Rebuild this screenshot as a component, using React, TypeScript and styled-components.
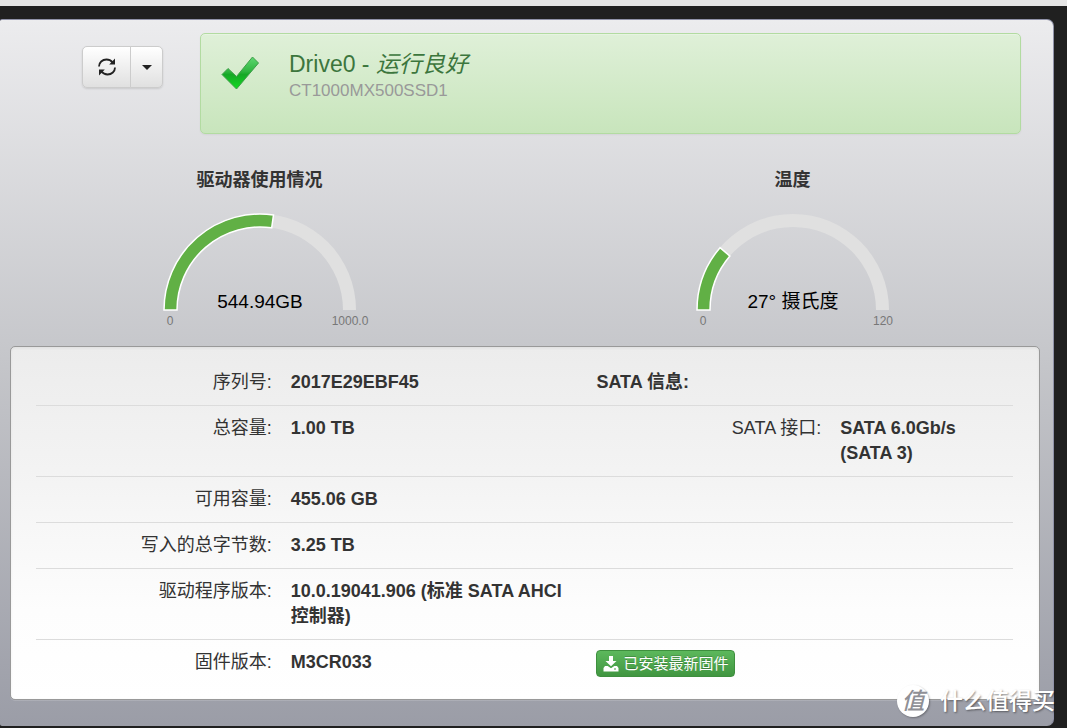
import React from "react";
import styled, { createGlobalStyle } from "styled-components";

const Global = createGlobalStyle`
  *, *::before, *::after { box-sizing: border-box; }
  body {
    margin: 0;
    background: #202020;
    color: #333;
    font: 18px/25px "Liberation Sans", "Noto Sans CJK SC", sans-serif;
  }
`;

const Page = styled.div`
  position: relative;
  display: flex;
  flex-direction: column;
  min-height: 100vh;
  padding-bottom: 2px;
  border-top: 6px solid #e5e5e5;
`;

const Panel = styled.main`
  flex: 1;
  margin: 13px 13px 0 0;
  padding: 13px 13px 24px 10px;
  border: 1px solid #9092a8;
  border-left: 0;
  border-bottom-color: #9b9da7;
  border-radius: 2px 7px 7px 2px;
  background: linear-gradient(#ececee, #c5c6ca 48%, #9b9da7);
`;

const Header = styled.header`
  display: flex;
  align-items: flex-start;
  gap: 37px;
  padding: 0 19px 0 72px;
`;

const ButtonGroup = styled.div`
  display: flex;
  margin-top: 13px;
  border-radius: 5px;
  box-shadow: 0 1px 2px rgba(0, 0, 0, 0.12);
`;

const ToolButton = styled.button<{ $side: "left" | "right" }>`
  display: flex;
  align-items: center;
  justify-content: center;
  width: ${(p) => (p.$side === "left" ? 49 : 33)}px;
  height: 42px;
  margin-left: ${(p) => (p.$side === "left" ? 0 : -1)}px;
  padding: 0;
  border: 1px solid #ccc;
  border-radius: ${(p) => (p.$side === "left" ? "5px 0 0 5px" : "0 5px 5px 0")};
  background: linear-gradient(#fff, #e0e0e0);
  color: #222;
  cursor: pointer;
`;

const Status = styled.section`
  display: flex;
  flex: 1;
  gap: 29px;
  min-height: 101px;
  padding: 16px 20px;
  border: 1px solid #b2dba1;
  border-radius: 5px;
  background: linear-gradient(#dff0d8, #c8e5bc);
  box-shadow: inset 0 1px 0 rgba(255, 255, 255, 0.25), 0 1px 2px rgba(0, 0, 0, 0.05);
`;

const StatusIcon = styled.svg`
  flex: none;
  margin-top: 4px;
`;

const DriveName = styled.h1`
  margin: 0;
  color: #3c763d;
  font-size: 23px;
  font-weight: 400;
  line-height: 28px;
`;

const DriveModel = styled.p`
  margin: 0;
  color: #999;
  font-size: 17px;
  line-height: 26px;
`;

const Gauges = styled.section`
  display: grid;
  grid-template-columns: 1fr 1fr;
  gap: 38px;
  margin: 33px 0 13px;
  padding-left: 2px;
`;

const GaugeBox = styled.div`
  display: flex;
  flex-direction: column;
  align-items: center;
`;

const GaugeTitle = styled.h2`
  margin: 0;
  font-size: 18px;
  line-height: 26px;
`;

const GaugeText = styled.text<{ $minor?: boolean }>`
  fill: ${(p) => (p.$minor ? "#777" : "#000")};
  font-size: ${(p) => (p.$minor ? 12 : 19)}px;
  text-anchor: middle;
`;

const Card = styled.section`
  padding: 13px 26px 14px 25px;
  border: 1px solid #999;
  border-radius: 5px;
  background: linear-gradient(#ececec, #f3f3f3 35%, #fdfdfd 75%, #fff);
  box-shadow: inset 0 1px 3px rgba(0, 0, 0, 0.06), 0 1px 0 rgba(255, 255, 255, 0.15);
`;

const Details = styled.table`
  width: 100%;
  table-layout: fixed;
  border-collapse: separate;
  border-spacing: 0;

  tr:not(:last-child) > * {
    border-bottom: 1px solid #dcdcdc;
  }
`;

const Column = styled.col<{ $w: number }>`
  width: ${(p) => p.$w}px;
`;

const Label = styled.th`
  padding: 10px 0;
  font-weight: 400;
  text-align: right;
  vertical-align: top;
`;

const Value = styled.td`
  padding: 10px 0 10px 19px;
  font-weight: 700;
  vertical-align: top;
`;

const Subhead = styled.th`
  padding: 10px 0 10px 19px;
  text-align: left;
`;

const FirmwareButton = styled.button`
  display: flex;
  align-items: center;
  gap: 4px;
  height: 27px;
  margin-bottom: -2px;
  padding: 0 6px;
  border: 1px solid #3e8f3e;
  border-radius: 4px;
  background: linear-gradient(#5cb85c, #419641);
  color: #fff;
  font: 15px/24px "Liberation Sans", "Noto Sans CJK SC", sans-serif;
  text-shadow: 0 -1px 0 rgba(0, 0, 0, 0.2);
  white-space: nowrap;
  cursor: pointer;
`;

const Watermark = styled.div`
  position: absolute;
  right: 12px;
  bottom: 11px;
  display: flex;
  align-items: center;
  gap: 11px;
  color: #fff;
  font-size: 23px;
  font-weight: 500;
  line-height: 32px;
  text-shadow: 1px 1px 2px rgba(0, 0, 0, 0.45);
`;

const Seal = styled.span`
  width: 32px;
  height: 32px;
  border-radius: 50%;
  background: #fff;
  color: #8f9096;
  font-style: italic;
  text-align: center;
  text-shadow: none;
  box-shadow: 1px 1px 2px rgba(0, 0, 0, 0.3);
`;

const CX = 120;
const CY = 117;
const OUTER = 96;
const INNER = 83;

function band(fraction: number) {
  const a = Math.PI * (1 - fraction);
  const at = (r: number) => `${CX + r * Math.cos(a)} ${CY - r * Math.sin(a)}`;
  return `M${CX - OUTER} ${CY}A${OUTER} ${OUTER} 0 0 1 ${at(OUTER)}L${at(INNER)}A${INNER} ${INNER} 0 0 0 ${CX - INNER} ${CY}Z`;
}

type GaugeProps = { title: string; value: number; max: number; text: string; maxText: string };

function Gauge({ title, value, max, text, maxText }: GaugeProps) {
  return (
    <GaugeBox>
      <GaugeTitle>{title}</GaugeTitle>
      <svg width="240" height="140" viewBox="0 0 240 140" role="img" aria-label={`${title} ${text}`}>
        <path d={band(1)} fill="#e0e0e0" />
        <path d={band(value / max)} fill="#61b045" stroke="#fff" strokeWidth="1.5" />
        <GaugeText x={CX} y={115}>{text}</GaugeText>
        <GaugeText $minor x={30} y={132}>0</GaugeText>
        <GaugeText $minor x={210} y={132}>{maxText}</GaugeText>
      </svg>
    </GaugeBox>
  );
}

type Row = { label: string; value: string; side?: React.ReactNode };

const rows: Row[] = [
  {
    label: "序列号:",
    value: "2017E29EBF45",
    side: <Subhead colSpan={2}>SATA 信息:</Subhead>,
  },
  {
    label: "总容量:",
    value: "1.00 TB",
    side: (
      <>
        <Label scope="row">SATA 接口:</Label>
        <Value>SATA 6.0Gb/s (SATA 3)</Value>
      </>
    ),
  },
  { label: "可用容量:", value: "455.06 GB" },
  { label: "写入的总字节数:", value: "3.25 TB" },
  { label: "驱动程序版本:", value: "10.0.19041.906 (标准 SATA AHCI 控制器)" },
  {
    label: "固件版本:",
    value: "M3CR033",
    side: (
      <Value colSpan={2}>
        <FirmwareButton type="button">
          <svg width="16" height="16" viewBox="0 0 16 16" fill="#fff" aria-hidden="true">
            <path d="M6 0h4v5h3.500L8 10.300 2.500 5H6z" />
            <path d="M2 10h2.700L8 12.300l3.300-2.300H14l1.500 2v3.500H.5V12zM11 12.500v1h2v-1z" fillRule="evenodd" />
          </svg>
          已安装最新固件
        </FirmwareButton>
      </Value>
    ),
  },
];

export default function App() {
  return (
    <Page>
      <Global />
      <Panel>
        <Header>
          <ButtonGroup>
            <ToolButton $side="left" type="button" aria-label="刷新">
              <svg width="18" height="18" viewBox="0 0 18 18" fill="none" stroke="currentColor" strokeWidth="1.8">
                <path d="M1 8.500C1 4.500 4.300 1.500 8.500 1.500c2.500 0 4.500 1 6 2.800" />
                <path d="M17 9.500c0 4-3.300 7-7.500 7-2.500 0-4.500-1-6-2.800" />
                <path d="M17 .6V6.400H11.200zM1 17.400V11.600H6.800z" fill="currentColor" stroke="none" />
              </svg>
            </ToolButton>
            <ToolButton $side="right" type="button" aria-label="更多">
              <svg width="10" height="5" viewBox="0 0 10 5">
                <path d="M0 0h10L5 5z" fill="currentColor" />
              </svg>
            </ToolButton>
          </ButtonGroup>
          <Status>
            <StatusIcon width="39" height="37" viewBox="0 0 39 37" aria-hidden="true">
              <defs>
                <linearGradient id="tick" x1="0" y1="0" x2="0" y2="1">
                  <stop offset="0" stopColor="#5fd872" />
                  <stop offset=".45" stopColor="#2fb53f" />
                  <stop offset=".55" stopColor="#16a826" />
                  <stop offset="1" stopColor="#12dc22" />
                </linearGradient>
              </defs>
              <path d="M1 20.500L7 14.500 15.500 22.500 31.500 3 37.500 9 15.500 35z" fill="url(#tick)" stroke="#3f9f49" strokeWidth="1" strokeLinejoin="round" />
            </StatusIcon>
            <div>
              <DriveName>
                Drive0 - <em>运行良好</em>
              </DriveName>
              <DriveModel>CT1000MX500SSD1</DriveModel>
            </div>
          </Status>
        </Header>
        <Gauges>
          <Gauge title="驱动器使用情况" value={544.94} max={1000} text="544.94GB" maxText="1000.0" />
          <Gauge title="温度" value={27} max={120} text="27° 摄氏度" maxText="120" />
        </Gauges>
        <Card>
          <Details>
            <colgroup>
              <Column $w={118} />
              <Column $w={153} />
              <Column $w={122} />
              <Column $w={96} />
            </colgroup>
            <tbody>
              {rows.map((row) => (
                <tr key={row.label}>
                  <Label scope="row">{row.label}</Label>
                  <Value>{row.value}</Value>
                  {row.side ?? <td colSpan={2} />}
                </tr>
              ))}
            </tbody>
          </Details>
        </Card>
      </Panel>
      <Watermark>
        <Seal>值</Seal>
        什么值得买
      </Watermark>
    </Page>
  );
}
